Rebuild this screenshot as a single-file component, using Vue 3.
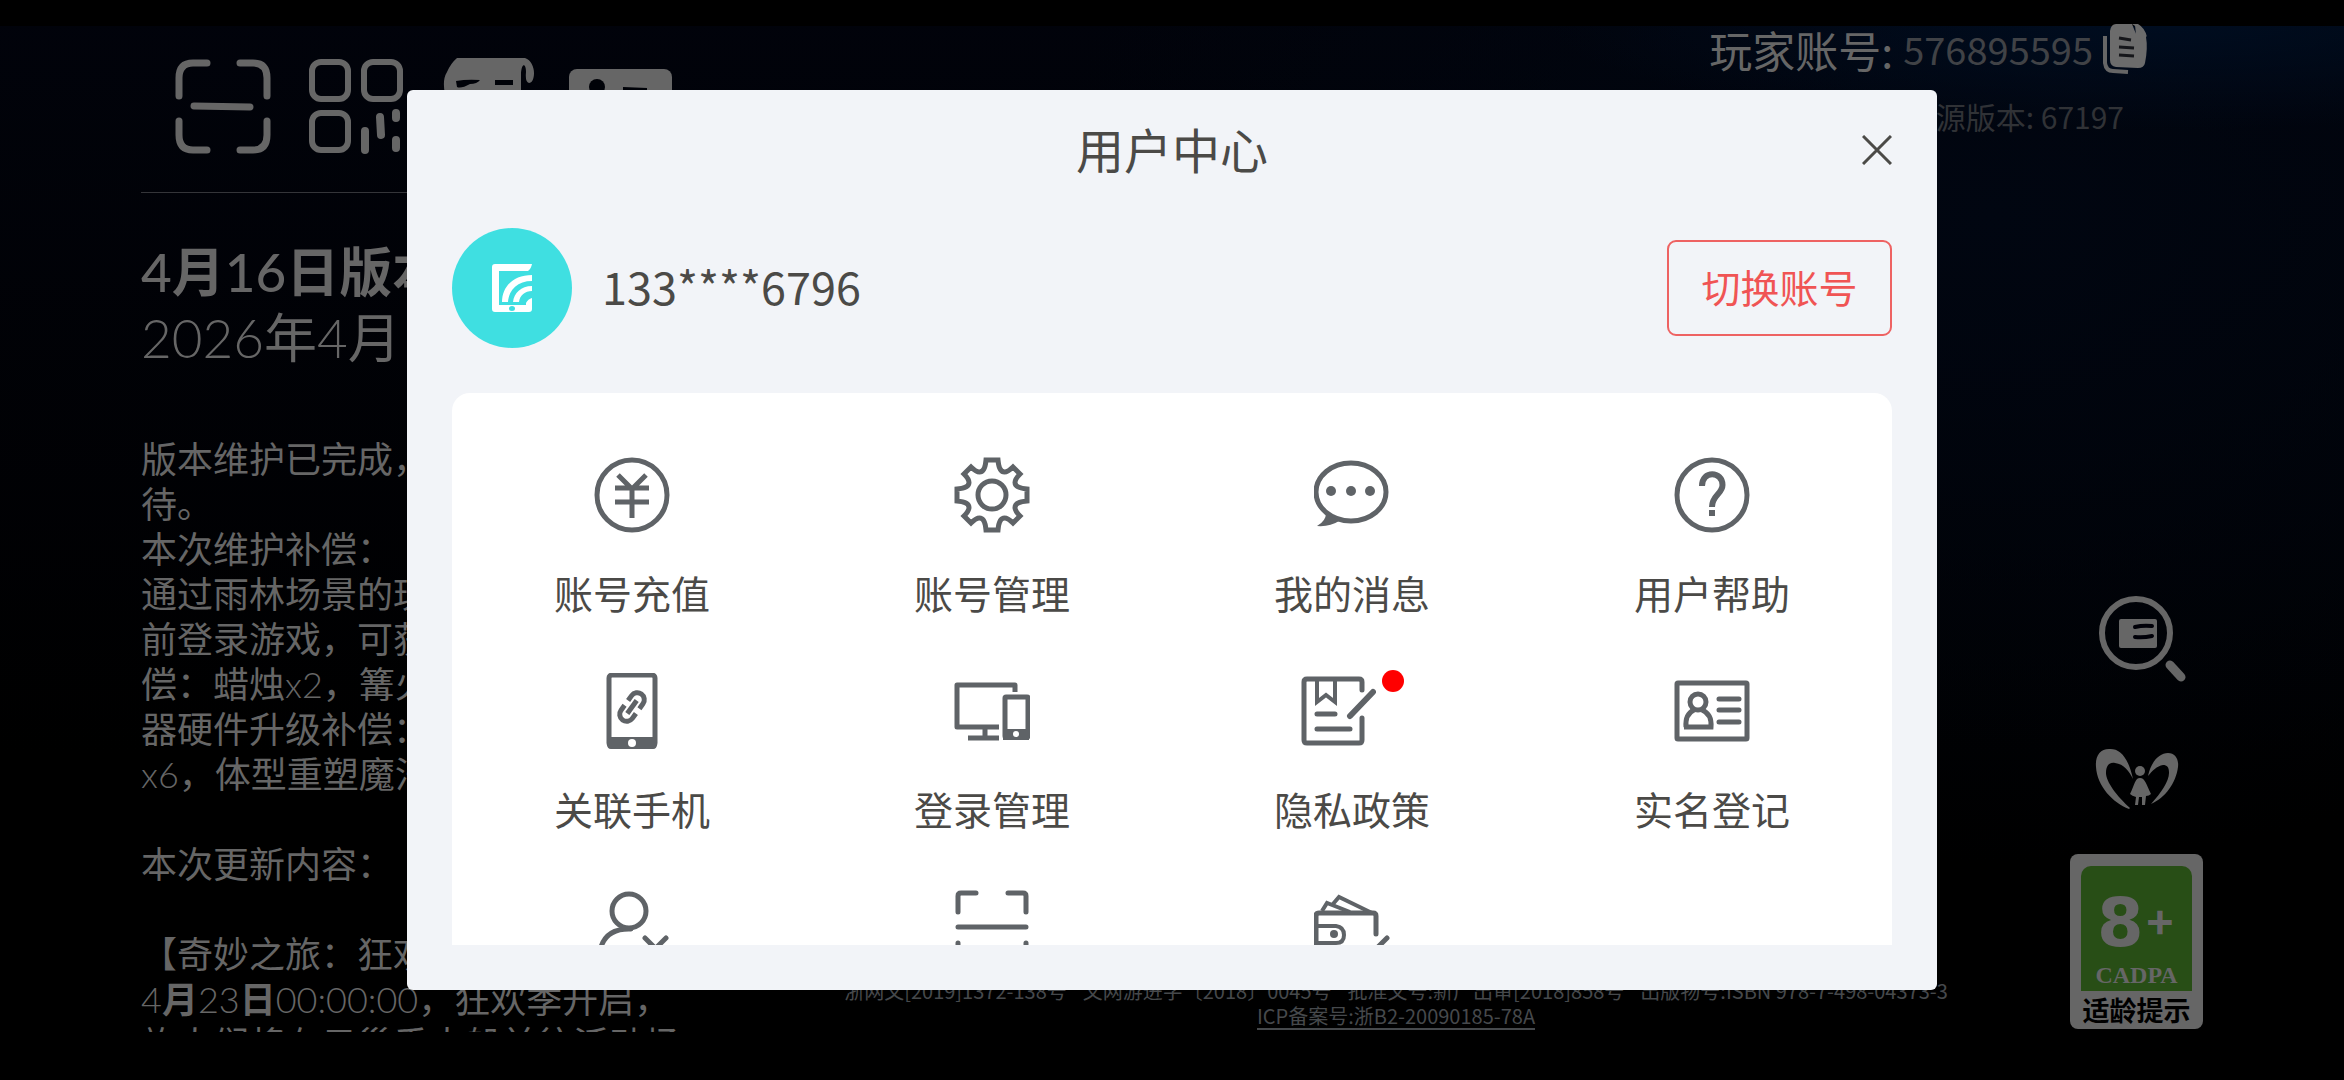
<script setup>
const paragraphs = [
  '版本维护已完成，',
  '待。',
  '本次维护补偿：',
  '通过雨林场景的玩',
  '前登录游戏，可获',
  '偿：蜡烛x2，篝火',
  '器硬件升级补偿：',
  'x6，体型重塑魔法',
  '',
  '本次更新内容：',
  '',
  '【奇妙之旅：狂欢',
  '4月23日00:00:00，狂欢季开启，',
  '旅人们将在云巢乘大船前往活动场',
]

// Latin runs are set lighter than the Chinese text around them
const runs = (line) => line.match(/[\x20-\x7e]+|[^\x20-\x7e]+/g) || []
const isLatin = (run) => /^[\x20-\x7e]/.test(run)
const isUnit = (run) => run === '月' || run === '日'

const licences = [
  '浙网文[2019]1372-138号',
  '文网游进字〔2018〕0045号',
  '批准文号:新广出审[2018]858号',
  '出版物号:ISBN 978-7-498-04373-3',
]

const menu = [
  { id: 'recharge', label: '账号充值' },
  { id: 'settings', label: '账号管理' },
  { id: 'message', label: '我的消息' },
  { id: 'help', label: '用户帮助' },
  { id: 'phone', label: '关联手机' },
  { id: 'devices', label: '登录管理' },
  { id: 'privacy', label: '隐私政策', badge: true },
  { id: 'identity', label: '实名登记' },
  { id: 'cancel', label: '账号注销' },
  { id: 'scan', label: '扫码登录' },
  { id: 'wallet', label: '消费管理' },
]
</script>

<template>
  <div class="page">
    <main class="game">
      <section class="notice">
        <nav class="tools">
          <button type="button" aria-label="扫一扫">
            <svg width="96" height="96" viewBox="0 0 96 96" fill="none" stroke="#666" stroke-width="7" stroke-linecap="round">
              <path d="M4 38V20Q4 5 18 5H32M65 5H78Q92 5 92 20V38M92 63V77Q92 92 78 92H65M32 92H18Q4 92 4 77V63M19 48L75 49" />
            </svg>
          </button>
          <button type="button" aria-label="二维码">
            <svg width="100" height="96" viewBox="0 0 100 96" fill="none" stroke="#666" stroke-width="6">
              <rect x="7" y="4" width="36" height="37" rx="9" />
              <rect x="59" y="4" width="36" height="37" rx="9" />
              <rect x="7" y="55" width="36" height="37" rx="9" />
              <path d="M60 73V92M75 59L76 77M91 55V60M91 82V90" stroke-width="8" stroke-linecap="round" />
            </svg>
          </button>
          <button type="button" aria-label="公告">
            <svg width="96" height="96" viewBox="0 0 96 96" fill="#666">
              <path d="M18 0H86C92 2 95 9 95 15C95 21 93 25 90 25Q86 24 87 14C87 6 83 4 82 15V90H20L6 36Q3 22 8 14Q12 5 18 0Z" />
              <path d="M17 23Q28 21 41 22Q38 26 31 26Q22 31 18 29ZM56 22H74V27H56Z" fill="#000208" />
            </svg>
          </button>
          <button type="button" aria-label="名片">
            <svg width="104" height="96" viewBox="0 0 104 96">
              <rect y="11" width="103" height="76" rx="8" fill="#666" />
              <circle cx="28" cy="29" r="8" fill="#000208" />
              <path d="M54 29L78 30V36H54Z" fill="#000208" />
            </svg>
          </button>
        </nav>
        <h1><span>4</span>月<span>16</span>日版本</h1>
        <p class="date"><span>2026</span>年<span>4</span>月</p>
        <div class="body">
          <p v-for="(line, i) in paragraphs" :key="i">
            <span v-for="(run, j) in runs(line)" :key="j" :class="{ latin: isLatin(run), unit: isUnit(run) }">{{ run }}</span>
          </p>
        </div>
      </section>

      <section class="account">
        <div class="player">
          <span>玩家账号:</span>
          <span class="uid">576895595</span>
          <button type="button" aria-label="复制">
            <svg width="46" height="52" viewBox="0 0 46 52">
              <path d="M13 1H29L33 11L43 14Q45 25 42 40Q41 45 35 45L13 44Q7 43 7 37V8Q8 1 13 1ZM32 2L43 12L43 17L33 12Z" fill="#6c6c6c" />
              <path d="M29 1H35Q42 5 44 14L32 3Z" fill="#6c6c6c" />
              <path d="M16 15L28 17M16 24L31 25M16 32L31 33" stroke="#15161a" stroke-width="3" />
              <path d="M2 13V40Q3 48 10 48L25 49" fill="none" stroke="#666" stroke-width="4" />
            </svg>
          </button>
        </div>
        <p class="version">源版本: 67197</p>
      </section>

      <footer class="legal">
        <p><span v-for="item in licences" :key="item">{{ item }}</span></p>
        <a href="#icp">ICP备案号:浙B2-20090185-78A</a>
      </footer>

      <aside class="rail">
        <button type="button" class="search" aria-label="查询">
          <svg width="88" height="88" viewBox="0 0 88 88">
            <circle cx="37" cy="37" r="34" fill="none" stroke="#666" stroke-width="6" />
            <path d="M71 69L82 81" stroke="#666" stroke-width="9" stroke-linecap="round" />
            <rect x="20" y="23" width="38" height="29" rx="2" fill="#666" />
            <path d="M36 31Q44 29 53 30M36 41Q44 42 53 40" fill="none" stroke="#000008" stroke-width="4" stroke-linecap="round" />
          </svg>
        </button>
        <button type="button" aria-label="家长监护">
          <svg width="84" height="62" viewBox="0 0 84 62" fill="#666">
            <path d="M38 31C33 8 24 0 14 1C5 1 0 8 1 19C2 38 18 55 34 61L35 60C22 48 11 34 11 25C11 18 14 14 20 15C29 16 34 23 38 31Z" />
            <path d="M53 28C56 14 64 5 73 5C80 5 84 11 83 19C81 35 70 50 56 56C66 45 74 33 74 25C74 19 72 17 68 17C62 18 57 23 53 28Z" />
            <circle cx="45" cy="23" r="5" />
            <path d="M45 30C40 30 40 36 35 46Q37 48 41 49L40 57H43L44 49H47V57H50L51 48Q54 48 56 46C51 36 50 30 45 30Z" />
          </svg>
        </button>
        <div class="rating">
          <div class="rating-top">
            <div class="age"><b>8</b><span>+</span></div>
            <div class="cadpa">CADPA</div>
          </div>
          <div class="hint">适龄提示</div>
        </div>
      </aside>
    </main>

    <div class="overlay">
      <section class="dialog" role="dialog" aria-labelledby="dialog-title">
        <header>
          <h2 id="dialog-title">用户中心</h2>
          <button type="button" class="close" aria-label="关闭">
            <svg width="30" height="30" viewBox="0 0 30 30" stroke="#4b4a47" stroke-width="3"><path d="M1 1L29 29M29 1L1 29" /></svg>
          </button>
        </header>
        <div class="profile">
          <div class="avatar">
            <svg width="40" height="48" viewBox="0 0 40 48" fill="#fff">
              <path fill-rule="evenodd" d="M3 0H40Q39 5 36 7H7V41H34V39Q36 35 40 34V45Q40 48 37 48H3Q0 48 0 45V3Q0 0 3 0ZM20 42A3 2.500 0 1 0 20 47A3 2.500 0 1 0 20 42Z" />
              <path d="M10 38C10 22 22 11 40 11V17C26 17 17 25 16 38ZM21 38C22 29 29 22 40 22V27C33 27 28 31 27 38Z" />
            </svg>
          </div>
          <span class="number">133****6796</span>
          <button type="button" class="switch">切换账号</button>
        </div>
        <div class="card">
          <button v-for="item in menu" :key="item.id" type="button" class="item">
            <span class="icon">
              <svg width="76" height="76" viewBox="0 0 76 76" fill="none" stroke="#5f6367" stroke-width="5">
                <template v-if="item.id === 'recharge'">
                  <circle cx="38" cy="38" r="35" />
                  <path d="M24 18L38 32L52 18M21 31H55M21 45H55M38 31V61" />
                </template>
                <template v-else-if="item.id === 'settings'">
                  <path d="M32 3H44C44.500 9 46 15 50.500 15C54 15 57 12 59 10L66 17C64 19 61 22 61 25.500C61 30 67 31.500 73 32V44C67 44.500 61 46 61 50.500C61 54 64 57 66 59L59 66C57 64 54 61 50.500 61C46 61 44.500 67 44 73H32C31.500 67 30 61 25.500 61C22 61 19 64 17 66L10 59C12 57 15 54 15 50.500C15 46 9 44.500 3 44V32C9 31.500 15 30 15 25.500C15 22 12 19 10 17L17 10C19 12 22 15 25.500 15C30 15 31.500 9 32 3Z" />
                  <circle cx="38" cy="38" r="14" />
                </template>
                <template v-else-if="item.id === 'message'">
                  <ellipse cx="37" cy="35" rx="35" ry="29" />
                  <path d="M12 56Q12 64 3 69Q16 70 25 64Z" fill="#5f6367" stroke="none" />
                  <g fill="#5f6367" stroke="none">
                    <circle cx="17" cy="34" r="5" /><circle cx="37" cy="34" r="5" /><circle cx="56" cy="34" r="5" />
                  </g>
                </template>
                <template v-else-if="item.id === 'help'">
                  <circle cx="38" cy="38" r="35" />
                  <path d="M28 29C28 13 48.500 14 48.500 28C48.500 37 38 38 38 50M38 53V59" stroke-width="6" />
                </template>
                <template v-else-if="item.id === 'phone'">
                  <rect x="15" y="2" width="46" height="71" rx="3" />
                  <path d="M13 64H63V71Q63 76 59 76H17Q13 76 13 71Z" fill="#5f6367" stroke="none" />
                  <circle cx="38" cy="70" r="4" fill="#fff" stroke="none" />
                  <g transform="translate(38 34) rotate(36)">
                    <path d="M-7 -3V-9A7 7 0 0 1 7 -9V-3M-7 3V9A7 7 0 0 0 7 9V3M0 -8V8" />
                  </g>
                </template>
                <template v-else-if="item.id === 'devices'">
                  <path d="M61 19V12H3V54H45M31 54V65M14 65H45" stroke-linejoin="round" />
                  <rect x="51" y="24" width="23" height="40" rx="1" />
                  <path d="M49 56H75V67H49Z" fill="#5f6367" stroke="none" />
                  <circle cx="62" cy="61" r="3" fill="#fff" stroke="none" />
                </template>
                <template v-else-if="item.id === 'privacy'">
                  <path d="M62 17V9Q62 6 59 6H7Q4 6 4 9V67Q4 70 7 70H59Q62 70 62 67V45M17 41H35M17 56H50" stroke-linecap="round" />
                  <path d="M17 6V29L26 22L35 29V6" stroke-width="4" />
                  <path d="M50 43L73 19" stroke-width="6" stroke-linecap="round" />
                </template>
                <template v-else-if="item.id === 'identity'">
                  <rect x="3" y="10" width="70" height="56" rx="1" />
                  <ellipse cx="24" cy="29" rx="8" ry="8" />
                  <path d="M12 54Q11 41 20 37M28 37Q38 41 37 54H10" />
                  <path d="M45 26H65M45 37H65M45 49H65" stroke-linecap="round" />
                </template>
                <template v-else-if="item.id === 'cancel'">
                  <circle cx="35" cy="22" r="17" />
                  <path d="M37 40Q13 39 7 58L6 72H42M51 49L72 70M72 49L51 70" stroke-linecap="round" />
                </template>
                <template v-else-if="item.id === 'scan'">
                  <path d="M4 23V7Q4 4 7 4H22M54 4H69Q72 4 72 7V23M4 38H72M4 54V69Q4 72 7 72H22M54 72H69Q72 72 72 69V54" stroke-linecap="round" />
                </template>
                <template v-else>
                  <path d="M62 45V27Q62 24 59 24H5Q2 24 2 27V69Q2 72 5 72H50" stroke-linecap="round" />
                  <path d="M2 37H22Q30 38 30 46Q30 54 22 54H2M8 22L13 14L36 23M19 15L25 8L58 24" stroke-width="4" />
                  <circle cx="20" cy="45" r="4" fill="#5f6367" stroke="none" />
                  <path d="M73 49L54 68" stroke-linecap="round" />
                </template>
              </svg>
              <i v-if="item.badge" class="dot"></i>
            </span>
            <span class="label">{{ item.label }}</span>
          </button>
        </div>
      </section>
    </div>
  </div>
</template>

<style>
body {
  margin: 0;
  background: #000;
}
</style>

<style scoped>
.page {
  position: relative;
  height: 100vh;
  overflow: hidden;
  color: #666;
  font-family: "Noto Sans CJK SC", sans-serif;
  background:
    linear-gradient(#000 26px, transparent 26px),
    radial-gradient(ellipse 26% 10% at 92% 2%, #000d20, transparent),
    radial-gradient(ellipse 40% 60% at 85% 20%, #010611, transparent),
    linear-gradient(#01030b, #000 70%);
}

h1, h2, p {
  margin: 0;
  font-weight: 400;
}

button {
  padding: 0;
  border: 0;
  background: none;
  font: inherit;
  color: inherit;
  cursor: pointer;
}

svg {
  display: block;
}

.game {
  display: grid;
  grid-template-columns: 581px 1fr 133px;
  grid-template-rows: auto 1fr;
  height: 100%;
  padding: 0 141px;
  box-sizing: border-box;
}

.notice {
  grid-row: 1 / 3;
  display: flex;
  flex-direction: column;
  min-height: 0;
  padding: 58px 0 48px;
  font-family: Lato, "Noto Sans CJK SC", sans-serif;
  white-space: nowrap;
}

.tools {
  display: flex;
  gap: 34px;
  padding: 0 0 38px 34px;
  border-bottom: 1px solid #343539;
  margin-bottom: 46px;
}

.notice h1 {
  font-size: 53px;
  line-height: 66px;
  font-weight: 700;
}

.notice h1 span {
  font-weight: 500;
}

.date {
  font-size: 53px;
  line-height: 66px;
}

.date span,
.latin {
  font-weight: 300;
}

.unit {
  font-weight: 700;
}

.body {
  flex: 1;
  min-height: 0;
  margin-top: 66px;
  overflow: hidden;
  font-size: 36px;
}

.body p {
  height: 45px;
  line-height: 45px;
}

.account {
  grid-column: 2 / 4;
  display: flex;
  flex-direction: column;
  align-items: flex-end;
  padding-top: 23px;
}

.player {
  display: flex;
  align-items: center;
  gap: 10px;
  padding-right: 54px;
  font-size: 43px;
  line-height: 52px;
}

.uid {
  font-size: 38px;
  color: #404246;
}

.version {
  margin-top: 21px;
  padding-right: 79px;
  font-size: 30px;
  line-height: 40px;
  color: #303236;
}

.legal {
  grid-column: 2;
  grid-row: 2;
  align-self: end;
  display: flex;
  flex-direction: column;
  align-items: center;
  padding-bottom: 50px;
  font-size: 20px;
  line-height: 26px;
  color: #46494c;
  white-space: nowrap;
}

.legal p {
  display: flex;
  gap: 16px;
}

.legal a {
  color: inherit;
  line-height: 24px;
  text-decoration: none;
  border-bottom: 2px solid #46494c;
}

.rail {
  grid-column: 3;
  grid-row: 2;
  align-self: end;
  display: flex;
  flex-direction: column;
  align-items: center;
  gap: 44px;
  padding-bottom: 51px;
}

.search {
  padding-left: 12px;
  margin-bottom: 20px;
}

.rating {
  width: 100%;
  padding: 12px 11px 0;
  box-sizing: border-box;
  border-radius: 8px;
  background: #666;
  text-align: center;
}

.rating-top {
  display: flex;
  flex-direction: column;
  height: 125px;
  border-radius: 10px 10px 0 0;
  background: #284e16;
}

.age {
  flex: 1;
  display: flex;
  align-items: center;
  justify-content: center;
  padding-top: 16px;
  font-family: "DejaVu Sans", sans-serif;
  font-size: 67px;
  line-height: 68px;
}

.age span {
  font-family: Inter, sans-serif;
  font-size: 48px;
  line-height: 48px;
  font-weight: 600;
  padding-bottom: 8px;
}

.cadpa {
  height: 28px;
  font: 700 24px/24px "Liberation Serif", serif;
}

.hint {
  font-size: 27px;
  line-height: 38px;
  font-weight: 700;
  color: #000;
  white-space: nowrap;
}

.overlay {
  position: absolute;
  inset: 0;
  display: flex;
  align-items: center;
  justify-content: center;
}

.dialog {
  display: flex;
  flex-direction: column;
  width: calc(100% - 96px);
  max-width: 1530px;
  height: calc(100% - 96px);
  max-height: 900px;
  padding: 0 45px 45px;
  box-sizing: border-box;
  border-radius: 6px;
  background: #f2f4f8;
  color: #4b4a47;
}

.dialog header {
  display: grid;
  grid-template-columns: 30px 1fr 30px;
  align-items: center;
  height: 120px;
}

.dialog h2 {
  grid-column: 2;
  padding-bottom: 4px;
  text-align: center;
  font-size: 48px;
  line-height: 72px;
}

.profile {
  display: flex;
  align-items: center;
  gap: 30px;
  height: 120px;
  margin: 18px 0 45px;
}

.avatar {
  display: flex;
  align-items: center;
  justify-content: center;
  width: 120px;
  height: 120px;
  border-radius: 50%;
  background: #3fdfe1;
}

.number {
  padding-bottom: 4px;
  font-size: 45px;
  line-height: 60px;
}

.switch {
  width: 225px;
  height: 96px;
  margin-left: auto;
  padding-bottom: 4px;
  border: 2px solid #ee6262;
  border-radius: 9px;
  color: #f05454;
  font-size: 39px;
}

.card {
  flex: 1;
  min-height: 0;
  display: grid;
  grid-template-columns: repeat(4, 1fr);
  grid-auto-rows: 160px;
  gap: 56px 0;
  padding-top: 64px;
  box-sizing: border-box;
  overflow: hidden;
  border-radius: 18px 18px 0 0;
  background: #fff;
}

.item {
  display: flex;
  flex-direction: column;
  align-items: center;
  justify-content: space-between;
}

.icon {
  display: flex;
  gap: 6px;
}

.dot {
  width: 22px;
  height: 22px;
  margin-top: -3px;
  border-radius: 50%;
  background: #f00;
}

.label {
  font-size: 39px;
  line-height: 50px;
}
</style>
